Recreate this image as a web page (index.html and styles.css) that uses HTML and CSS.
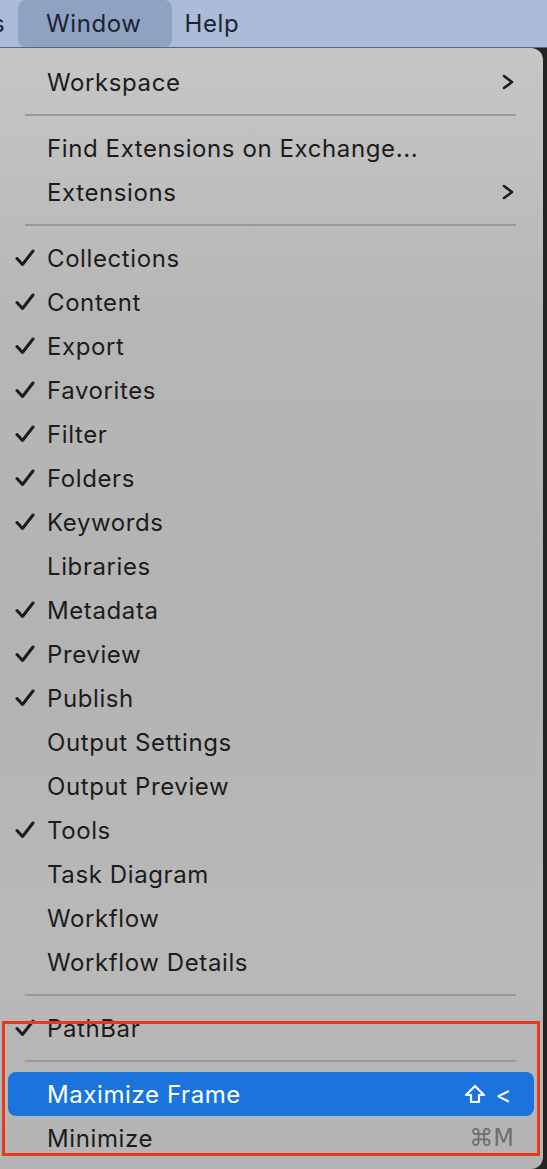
FILE: index.html
```html
<!DOCTYPE html>
<html lang="en">
<head>
    <meta charset="UTF-8">
    <title>Window menu</title>
    <link rel="stylesheet" href="styles.css">
</head>
<body>
    <div class="menubar">
        <span class="bar-item cut">s</span>
        <span class="bar-item open">Window</span>
        <span class="bar-item">Help</span>
    </div>

    <div class="stage">
        <div class="menu">
            <div class="item">Workspace <svg class="chev" viewBox="0 0 12 16"><path d="M2 2 L10 8 L2 14"/></svg></div>
            <div class="sep"></div>
            <div class="item">Find Extensions on Exchange...</div>
            <div class="item">Extensions <svg class="chev" viewBox="0 0 12 16"><path d="M2 2 L10 8 L2 14"/></svg></div>
            <div class="sep"></div>
            <div class="item checked">Collections</div>
            <div class="item checked">Content</div>
            <div class="item checked">Export</div>
            <div class="item checked">Favorites</div>
            <div class="item checked">Filter</div>
            <div class="item checked">Folders</div>
            <div class="item checked">Keywords</div>
            <div class="item">Libraries</div>
            <div class="item checked">Metadata</div>
            <div class="item checked">Preview</div>
            <div class="item checked">Publish</div>
            <div class="item">Output Settings</div>
            <div class="item">Output Preview</div>
            <div class="item checked">Tools</div>
            <div class="item">Task Diagram</div>
            <div class="item">Workflow</div>
            <div class="item">Workflow Details</div>
            <div class="sep"></div>
            <div class="item checked">PathBar</div>
            <div class="sep"></div>
            <div class="item active">Maximize Frame
                <span class="keys">
                    <svg class="shift" viewBox="0 0 22 20"><path d="M11 2 L20 11 L15 11 L15 18 L7 18 L7 11 L2 11 Z"/></svg>
                    <span>&lt;</span>
                </span>
            </div>
            <div class="item">Minimize <span class="keys dim">&#8984;M</span></div>
        </div>
        <div class="mark"></div>
    </div>

    <script>
        // put a tick in front of every checked item
        document.querySelectorAll('.item.checked').forEach((item) => {
            item.insertAdjacentHTML('afterbegin',
                '<svg class="tick" viewBox="0 0 20 18"><path d="M2 9.5 L7.5 15.5 L18 2"/></svg>');
        });
    </script>
</body>
</html>
```

FILE: styles.css
```css
body {
    margin: 0;
    background-color: #232323;
    font-family: Inter, "Noto Sans", sans-serif;
    color: #1c1c1c;
    overflow: hidden;
}
.menubar {
    height: 47px;
    background-color: #aabcd8;
    border-bottom: 1px solid #5f6878;
    display: flex;
    align-items: center;
}
.bar-item {
    font-size: 24px;
    letter-spacing: 0.6px;
    color: #1d2430;
    height: 47px;
    display: flex;
    align-items: center;
}
.bar-item.cut {
    margin-left: -8px;
    width: 26px;
}
.bar-item.open {
    background-color: #8fa2c2;
    border-radius: 8px;
    padding: 0 30px 0 28px;
    margin-right: 13px;
}
.stage {
    position: relative;
}
.menu {
    width: 543px;
    height: 1121px;
    box-sizing: border-box;
    padding-top: 12px;
    border-radius: 0 12px 12px 0;
    background: linear-gradient(180deg, #c6c6c6 0%, #b6b6b6 25%, #b3b3b3 55%, #b9b9b9 80%, #b4b4b4 100%);
}
.item {
    height: 44px;
    display: flex;
    align-items: center;
    padding: 0 29px 0 47px;
    font-size: 24px;
    letter-spacing: 0.6px;
    position: relative;
}
.item .tick {
    position: absolute;
    left: 15px;
    top: 13px;
    width: 20px;
    height: 18px;
    fill: none;
    stroke: #1c1c1c;
    stroke-width: 3;
    stroke-linecap: round;
    stroke-linejoin: round;
}
.chev {
    margin-left: auto;
    width: 12px;
    height: 16px;
    fill: none;
    stroke: #1c1c1c;
    stroke-width: 2.6;
    stroke-linecap: round;
    stroke-linejoin: round;
}
.sep {
    height: 2px;
    margin: 10px 27px 10px 25px;
    background-color: #999;
}
.item.active {
    margin: 0 9px 0 8px;
    padding: 0 22px 0 39px;
    background-color: #1a74dc;
    border-radius: 8px;
    color: #fff;
}
.keys {
    margin-left: auto;
    display: flex;
    align-items: center;
    gap: 10px;
}
.keys.dim {
    color: #6f6f6f;
    font-family: "DejaVu Sans", sans-serif;
    font-size: 24px;
    letter-spacing: 0;
}
.shift {
    width: 22px;
    height: 20px;
    fill: none;
    stroke: #fff;
    stroke-width: 2.2;
    stroke-linejoin: round;
}
.mark {
    position: absolute;
    left: 2px;
    top: 973px;
    width: 532px;
    height: 129px;
    border: 3px solid #e6391d;
}
```
